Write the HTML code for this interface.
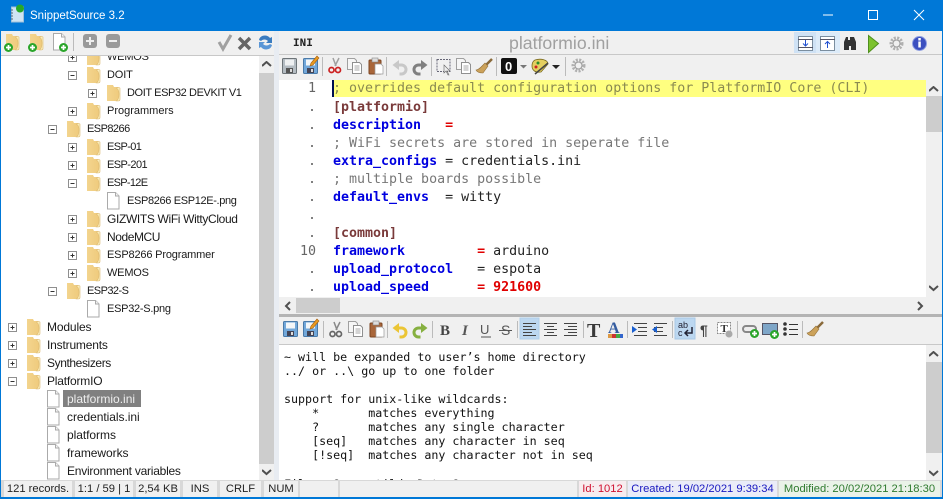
<!DOCTYPE html>
<html><head><meta charset="utf-8">
<style>
html,body{margin:0;padding:0;width:943px;height:499px;overflow:hidden;background:#f0f0f0}
body{position:relative;font-family:"Liberation Sans",sans-serif;font-size:12px;color:#111}
.a,.t,.c,.m,.i,.s{position:absolute}
.t{white-space:nowrap;line-height:18px;height:18px;color:#1a1a1a}
.u{font-size:11px}
.c,.m{font-family:"DejaVu Sans Mono",monospace;white-space:pre}
.c{left:333px;font-size:13.3px;line-height:18px;height:18px;color:#444}
.m{left:284px;font-size:11.67px;line-height:14px;height:14px;color:#111}
.k{font-weight:bold;color:#0000e0}.r{font-weight:bold;color:#e00000}.g{color:#777}
.n{position:absolute;left:280px;width:36px;text-align:right;font-family:"DejaVu Sans Mono",monospace;font-size:13.33px;line-height:18px;color:#666}
.s{top:481px;height:16px;line-height:16px;background:#f0f0f0;text-align:center;white-space:nowrap;font-size:11.2px;color:#222}
</style></head><body>
<svg width="0" height="0" style="position:absolute"><defs>
<linearGradient id="fg" x1="0" y1="0" x2="1" y2="0"><stop offset="0" stop-color="#f3d48e"/><stop offset="1" stop-color="#efcb7c"/></linearGradient>
<g id="fo"><path d="M0 1h6l1 2h4l1.500 1v11.500c0 1-1 1.500-2 1.500h-10.500z" fill="url(#fg)"/><path d="M9 4c2 .5 3 2 3 6s-1 6-2.500 7h1.500c1 0 2-.5 2-1.500v-11.500l-1-.5z" fill="#fbeebb" stroke="#dcb973" stroke-width=".6"/></g>
<g id="fi"><path d="M.5.5h8l3.500 3.500v13h-11.500z" fill="#fff" stroke="#aaa"/><path d="M8.500.5v3.500h3.500" fill="#f2f2f2" stroke="#aaa"/></g>
<g id="pl"><rect x=".5" y=".5" width="8" height="8" fill="#fff" stroke="#8f8f8f"/><path d="M2.500 4.500h4M4.500 2.500v4" stroke="#333"/></g>
<g id="mi"><rect x=".5" y=".5" width="8" height="8" fill="#fff" stroke="#8f8f8f"/><path d="M2.500 4.500h4" stroke="#333"/></g>
<g id="sv"><rect x=".5" y=".5" width="14" height="15" rx="1" fill="#b4bcc2" stroke="#6d7478"/><rect x="3" y="1.500" width="9" height="6" fill="#eef0f1"/><rect x="4" y="10" width="7" height="5" fill="#555"/><rect x="8" y="11" width="2" height="3" fill="#ddd"/></g>
<g id="sb"><rect x=".5" y=".5" width="14" height="15" rx="1" fill="#72a8da" stroke="#4a7aa8"/><rect x="3" y="1.500" width="9" height="6" fill="#f3f6f8"/><rect x="4" y="10" width="7" height="5" fill="#445"/><rect x="8" y="11" width="2" height="3" fill="#ddd"/></g>
<g id="pp"><path d="M12 0l2 2-6 7-3 1 1-3z" fill="#e89a20" stroke="#a86010" stroke-width=".6"/></g>
<g id="cut"><path d="M5 0l3 8M11 0l-4 8" stroke="#888" stroke-width="1.500" fill="none"/><circle cx="3.500" cy="12" r="2.500" fill="none" stroke="#666" stroke-width="1.700"/><circle cx="10" cy="12" r="2.500" fill="none" stroke="#666" stroke-width="1.700"/></g>
<g id="cutr"><path d="M5 0l3 8M11 0l-4 8" stroke="#a0a0a0" stroke-width="1.500" fill="none"/><circle cx="3.500" cy="12" r="2.500" fill="none" stroke="#c22" stroke-width="1.700"/><circle cx="10" cy="12" r="2.500" fill="none" stroke="#c22" stroke-width="1.700"/></g>
<g id="cp"><path d="M.5.5h7l2 2v9h-9z" fill="#f6f6f6" stroke="#a0a0a0"/><path d="M5.500 4.500h7l2 2v9h-9z" fill="#fff" stroke="#909090"/><path d="M7.500 8h5M7.500 10h5M7.500 12h5" stroke="#aaa"/></g>
<g id="pa"><rect x="1" y="2" width="12" height="14" rx="1" fill="#a9663a" stroke="#7c4522"/><rect x="4" y="0" width="6" height="4" fill="#ddd" stroke="#888" stroke-width=".6"/><path d="M7 6h6l2 2v8h-8z" fill="#fff" stroke="#999" stroke-width=".7"/></g>
<g id="br"><path d="M16 1l-6 6" stroke="#8a6a3a" stroke-width="2.500"/><path d="M9 5l3 3-5 7c-3 0-6-1-7-3 3 0 6-4 9-7z" fill="#cca25a" stroke="#937038" stroke-width=".6"/></g>
<g id="gear"><circle cx="7.500" cy="7.500" r="5.500" fill="none" stroke="#b0b0b0" stroke-width="3" stroke-dasharray="2 1.300"/><circle cx="7.500" cy="7.500" r="3.500" fill="none" stroke="#999"/></g>
<g id="un"><path d="M6 6h3.500a4.500 4.500 0 0 1 0 9h-2" fill="none" stroke-width="3"/><path d="M7 1L.5 6 7 11z" stroke="none"/></g>
<path id="chu" d="M0 5l4.500-4 4.500 4" fill="none" stroke="#505050" stroke-width="2"/>
<g id="plusg"><circle cx="4.500" cy="4.500" r="4.500" fill="#2aa52a"/><path d="M2 4.500h5M4.500 2v5" stroke="#fff" stroke-width="1.700"/></g>
</defs></svg>

<!-- title bar -->
<div class="a" style="left:0;top:0;width:943px;height:31px;background:#0078d7"></div>
<svg class="a" style="left:10px;top:4px" width="16" height="19"><rect x="1.500" y="3" width="12" height="15" fill="#cfe4f3" stroke="#9fc0d8"/><path d="M1 6h2M1 9h2M1 12h2M1 15h2" stroke="#567"/><circle cx="10" cy="4.500" r="4" fill="#28a828"/></svg>
<div class="t" style="left:30px;top:7px;color:#fff;font-size:11.500px">SnippetSource 3.2</div>
<svg class="a" style="left:820px;top:8px" width="120" height="16"><path d="M3 7h10" stroke="#fff"/><rect x="48.500" y="2.500" width="9" height="9" fill="none" stroke="#fff"/><path d="M94 2l10 10M104 2l-10 10" stroke="#fff"/></svg>

<!-- window border -->
<div class="a" style="left:0;top:31px;width:1px;height:468px;background:#0078d7"></div>
<div class="a" style="left:942px;top:31px;width:1px;height:468px;background:#0078d7"></div>
<div class="a" style="left:0;top:497px;width:943px;height:2px;background:#0078d7"></div>

<!-- left toolbar -->
<div class="a" style="left:1px;top:31px;width:273px;height:25px;background:#f0f0f0;border-bottom:1px solid #c8c8c8;box-sizing:border-box"></div>
<svg class="a" style="left:0;top:31px" width="279" height="25">
<use href="#fo" x="6" y="2"/><use href="#plusg" x="4" y="12"/>
<use href="#fo" x="30" y="2"/><use href="#plusg" x="28" y="12"/>
<use href="#fi" x="53" y="2"/><use href="#plusg" x="59" y="12"/>
<path d="M73.500 2v18" stroke="#bbb"/>
<rect x="83" y="3" width="14" height="14" rx="3" fill="#9a9a9a"/><path d="M86 10h8M90 6v8" stroke="#eee" stroke-width="2"/>
<rect x="106" y="3" width="14" height="14" rx="3" fill="#9a9a9a"/><path d="M109 10h8" stroke="#eee" stroke-width="2"/>
<path d="M219 11l4 7 8-14" fill="none" stroke="#a0a0a0" stroke-width="3"/>
<path d="M239 7l11 11M250 7l-11 11" stroke="#666" stroke-width="3.500"/>
<path d="M259 9c1-5 8-6 11-2l2-1v6h-6l2-2c-2-2-5-2-7 0z" fill="#3a7cc0"/><path d="M272 14c-1 5-8 6-11 2l-2 1v-6h6l-2 2c2 2 5 2 7 0z" fill="#5a96d6"/>
</svg>

<!-- tree -->
<div class="a" style="left:1px;top:56px;width:258px;height:425px;background:#fff;overflow:hidden">
<svg class="a" style="left:-1px;top:-56px" width="259" height="481">
<use href="#pl" x="68" y="53"/><use href="#fo" x="87" y="48"/>
<use href="#mi" x="68" y="71"/><use href="#fo" x="87" y="66"/>
<use href="#pl" x="88" y="89"/><use href="#fo" x="107" y="84"/>
<use href="#pl" x="68" y="107"/><use href="#fo" x="87" y="102"/>
<use href="#mi" x="48" y="125"/><use href="#fo" x="67" y="120"/>
<use href="#pl" x="68" y="143"/><use href="#fo" x="87" y="138"/>
<use href="#pl" x="68" y="161"/><use href="#fo" x="87" y="156"/>
<use href="#mi" x="68" y="179"/><use href="#fo" x="87" y="174"/>
<use href="#fi" x="107" y="192"/>
<use href="#pl" x="68" y="215"/><use href="#fo" x="87" y="210"/>
<use href="#pl" x="68" y="233"/><use href="#fo" x="87" y="228"/>
<use href="#pl" x="68" y="251"/><use href="#fo" x="87" y="246"/>
<use href="#pl" x="68" y="269"/><use href="#fo" x="87" y="264"/>
<use href="#mi" x="48" y="287"/><use href="#fo" x="67" y="282"/>
<use href="#fi" x="87" y="300"/>
<use href="#pl" x="8" y="323"/><use href="#fo" x="27" y="318"/>
<use href="#pl" x="8" y="341"/><use href="#fo" x="27" y="336"/>
<use href="#pl" x="8" y="359"/><use href="#fo" x="27" y="354"/>
<use href="#mi" x="8" y="377"/><use href="#fo" x="27" y="372"/>
<use href="#fi" x="47" y="390"/><use href="#fi" x="47" y="408"/><use href="#fi" x="47" y="426"/><use href="#fi" x="47" y="444"/><use href="#fi" x="47" y="462"/>
</svg>
<div class="t u" style="left:106px;top:-8px;letter-spacing:-.2px">WEMOS</div>
<div class="t u" style="left:106px;top:10px;letter-spacing:-.15px">DOIT</div>
<div class="t u" style="left:126px;top:28px;letter-spacing:-.4px">DOIT ESP32 DEVKIT V1</div>
<div class="t u" style="left:106px;top:46px">Programmers</div>
<div class="t u" style="left:86px;top:64px;letter-spacing:-.55px">ESP8266</div>
<div class="t u" style="left:106px;top:82px;letter-spacing:-.6px">ESP-01</div>
<div class="t u" style="left:106px;top:100px;letter-spacing:-.57px">ESP-201</div>
<div class="t u" style="left:106px;top:118px;letter-spacing:-.7px">ESP-12E</div>
<div class="t u" style="left:126px;top:136px;letter-spacing:-.35px">ESP8266 ESP12E-.png</div>
<div class="t" style="left:106px;top:154px;letter-spacing:-.35px">GIZWITS WiFi WittyCloud</div>
<div class="t" style="left:106px;top:172px;letter-spacing:-.43px">NodeMCU</div>
<div class="t u" style="left:106px;top:190px;letter-spacing:-.17px">ESP8266 Programmer</div>
<div class="t u" style="left:106px;top:208px;letter-spacing:-.2px">WEMOS</div>
<div class="t u" style="left:86px;top:226px;letter-spacing:-.55px">ESP32-S</div>
<div class="t u" style="left:106px;top:244px;letter-spacing:-.27px">ESP32-S.png</div>
<div class="t" style="left:46px;top:262px;letter-spacing:-.14px">Modules</div>
<div class="t" style="left:46px;top:280px;letter-spacing:-.18px">Instruments</div>
<div class="t" style="left:46px;top:298px;letter-spacing:-.4px">Synthesizers</div>
<div class="t" style="left:46px;top:316px;letter-spacing:-.2px">PlatformIO</div>
<div class="a" style="left:62px;top:334px;width:78px;height:17px;background:#808080"></div>
<div class="t" style="left:66px;top:334px;color:#eee">platformio.ini</div>
<div class="t" style="left:66px;top:352px;letter-spacing:-.05px">credentials.ini</div>
<div class="t" style="left:66px;top:370px;letter-spacing:-.05px">platforms</div>
<div class="t" style="left:66px;top:388px;letter-spacing:-.05px">frameworks</div>
<div class="t" style="left:66px;top:406px;letter-spacing:-.24px">Environment variables</div>
</div>
<!-- tree scrollbar -->
<div class="a" style="left:259px;top:56px;width:15px;height:425px;background:#f0f0f0"></div>
<div class="a" style="left:259px;top:73px;width:15px;height:391px;background:#cdcdcd"></div>
<svg class="a" style="left:262px;top:61px" width="10" height="8"><use href="#chu"/></svg>
<svg class="a" style="left:262px;top:468px" width="10" height="8"><use href="#chu" transform="matrix(1 0 0 -1 0 7)"/></svg>
<div class="a" style="left:274px;top:31px;width:5px;height:450px;background:#e8ecf2"></div>

<!-- right top header -->
<div class="a" style="left:279px;top:31px;width:663px;height:24px;background:#f0f0f0;border-bottom:1px solid #c8c8c8;box-sizing:border-box"></div>
<div class="t" style="left:293px;top:35px;font-family:'Liberation Mono',monospace;font-weight:bold;font-size:11px;color:#222">INI</div>
<div class="t" style="left:509px;top:33px;font-size:17.700px;color:#a0a0a0;line-height:20px;height:20px">platformio.ini</div>
<svg class="a" style="left:790px;top:31px" width="150" height="25">
<rect x="4" y="1" width="22" height="21" fill="#cfe2f5"/><rect x="26" y="1" width="24" height="21" fill="#dcebf9"/>
<rect x="8.500" y="5.500" width="14" height="14" fill="#fff" stroke="#7b8e9f"/><path d="M8 8.500h15M8 16.500h15" stroke="#556"/><path d="M15.500 9v6M13 12.500l2.500 2.500 2.500-2.500" stroke="#2050d0" fill="none"/>
<rect x="30.500" y="5.500" width="14" height="14" fill="#fff" stroke="#7b8e9f"/><path d="M30 8.500h15" stroke="#556"/><path d="M37.500 17v-6M35 13l2.500-2.500 2.500 2.500" stroke="#2050d0" fill="none"/>
<path d="M54 11l2-5h2v3h2v-3h2l2 0 2 5v8h-5v-4h-2v4h-5z" fill="#333"/>
<path d="M78.500 4.500l10 8-10 9z" fill="#7cc22e" stroke="#4f8f1e"/>
<use href="#gear" x="99" y="5"/>
<circle cx="129.500" cy="12.500" r="7" fill="#3c50c0" stroke="#8f9fe0"/><rect x="128.300" y="10.500" width="2.500" height="6" fill="#fff"/><rect x="128.300" y="7" width="2.500" height="2.500" fill="#fff"/>
</svg>

<!-- editor toolbar -->
<div class="a" style="left:279px;top:55px;width:663px;height:25px;background:#f0f0f0"></div>
<svg class="a" style="left:279px;top:55px" width="320" height="25">
<use href="#sv" x="3" y="3"/><use href="#sb" x="24" y="3"/><use href="#pp" x="26" y="1"/>
<path d="M43.500 2v19M107.500 2v19M152.500 2v19M217.500 2v19M286.500 2v19" stroke="#bbb"/>
<use href="#cutr" x="49" y="3"/><use href="#cp" x="68" y="3"/><use href="#pa" x="89" y="3"/>
<use href="#un" x="113" y="4" fill="#c8c8c8" stroke="#c8c8c8"/>
<use href="#un" transform="translate(149 4) scale(-1 1)" fill="#808080" stroke="#808080"/>
<rect x="158" y="4.500" width="13" height="12" fill="none" stroke="#667" stroke-dasharray="2 1"/><path d="M165 10l6 6-3 0 2 4-1 0-2-4-2 2z" fill="#eee" stroke="#666" stroke-width=".6"/>
<use href="#cp" x="177" y="3"/><use href="#br" x="197" y="3"/>
<rect x="222" y="3" width="16" height="16" rx="2" fill="#111"/><text x="226" y="16" font-family="Liberation Sans" font-weight="bold" font-size="13" fill="#fff">0</text>
<path d="M241 10h7l-3.500 3.500z" fill="#777"/>
<path d="M256 5c6-2 13 0 13 4l-7 8c-6 1-9-2-9-6 0-3 1-5 3-6z" fill="#e4cf60" stroke="#7a6a20" stroke-width=".8"/><circle cx="259" cy="8" r="1.500" fill="#2a8c2a"/><circle cx="257" cy="12" r="1.500" fill="#c22"/><path d="M256 19l13-11" stroke="#444" stroke-width="1.500"/>
<path d="M273 10h8l-4 4z" fill="#222"/>
<use href="#gear" x="292" y="3"/>
</svg>

<!-- editor -->
<div class="a" style="left:279px;top:80px;width:663px;height:217px;background:#fff"></div>
<div class="a" style="left:333px;top:80px;width:593px;height:17px;background:#ffff80"></div>
<div class="a" style="left:332px;top:80px;width:2px;height:17px;background:#001050"></div>
<div class="n" style="top:80px">1</div>
<div class="n" style="top:99px">.</div><div class="n" style="top:117px">.</div><div class="n" style="top:135px">.</div><div class="n" style="top:153px">.</div><div class="n" style="top:171px">.</div><div class="n" style="top:189px">.</div><div class="n" style="top:207px">.</div><div class="n" style="top:225px">.</div>
<div class="n" style="top:243px">10</div><div class="n" style="top:261px">.</div><div class="n" style="top:279px">.</div>
<div class="c" style="top:80px;color:#8a8a50">; overrides default configuration options for PlatformIO Core (CLI)</div>
<div class="c" style="top:99px;font-weight:bold;color:#7a3a3a">[platformio]</div>
<div class="c" style="top:117px"><span class="k">description</span>   <span class="r">=</span></div>
<div class="c g" style="top:135px">; WiFi secrets are stored in seperate file</div>
<div class="c" style="top:153px;color:#222"><span class="k">extra_configs</span> = credentials.ini</div>
<div class="c g" style="top:171px">; multiple boards possible</div>
<div class="c" style="top:189px;color:#222"><span class="k">default_envs</span>  = witty</div>
<div class="c" style="top:225px;font-weight:bold;color:#7a3a3a">[common]</div>
<div class="c" style="top:243px;color:#222"><span class="k">framework</span>         <span class="r">=</span> arduino</div>
<div class="c" style="top:261px;color:#222"><span class="k">upload_protocol</span>   = espota</div>
<div class="c" style="top:279px;color:#222"><span class="k">upload_speed</span>      <span class="r">= 921600</span></div>
<!-- editor v scrollbar -->
<div class="a" style="left:926px;top:80px;width:16px;height:217px;background:#f0f0f0"></div>
<div class="a" style="left:926px;top:96px;width:16px;height:36px;background:#cdcdcd"></div>
<svg class="a" style="left:929px;top:86px" width="10" height="8"><use href="#chu"/></svg>
<svg class="a" style="left:929px;top:284px" width="10" height="8"><use href="#chu" transform="matrix(1 0 0 -1 0 7)"/></svg>
<!-- h scrollbar -->
<div class="a" style="left:279px;top:297px;width:663px;height:17px;background:#f0f0f0"></div>
<div class="a" style="left:296px;top:298px;width:44px;height:15px;background:#cdcdcd"></div>
<svg class="a" style="left:284px;top:301px" width="8" height="10"><path d="M6 1L2 5l4 4" fill="none" stroke="#505050" stroke-width="2"/></svg>
<svg class="a" style="left:916px;top:301px" width="8" height="10"><path d="M2 1l4 4-4 4" fill="none" stroke="#505050" stroke-width="2"/></svg>
<!-- splitter -->
<div class="a" style="left:279px;top:314px;width:663px;height:3px;background:#b4b4b4"></div>

<!-- memo toolbar -->
<div class="a" style="left:279px;top:317px;width:663px;height:28px;background:#f0f0f0;border-bottom:1px solid #c8c8c8;box-sizing:border-box"></div>
<svg class="a" style="left:0;top:0" width="943" height="345">
<use href="#sb" x="283" y="321"/><use href="#sb" x="303" y="321"/><use href="#pp" x="305" y="319"/>
<path d="M323.500 321v17M387.500 321v17M432.500 321v17M517.500 321v17M583.500 321v17M627.500 321v17M672.500 321v17M737.500 321v17M802.500 321v17" stroke="#bbb"/>
<use href="#cut" x="329" y="322"/><use href="#cp" x="348" y="321"/><use href="#pa" x="369" y="321"/>
<use href="#un" x="392" y="322" fill="#ebc535" stroke="#ebc535"/>
<use href="#un" transform="translate(428 322) scale(-1 1)" fill="#86b040" stroke="#86b040"/>
<text x="440" y="335" font-family="Liberation Serif" font-weight="bold" font-size="15" fill="#444">B</text>
<text x="462" y="335" font-family="Liberation Serif" font-style="italic" font-weight="bold" font-size="15" fill="#555">I</text>
<text x="480" y="334" font-family="Liberation Sans" font-size="13" fill="#555">U</text><path d="M481 337h10" stroke="#555"/>
<text x="501" y="335" font-family="Liberation Sans" font-size="14" fill="#555">S</text><path d="M499 330.500h13" stroke="#555"/>
<rect x="520" y="318" width="19" height="21" fill="#bcd7f0" stroke="#b0cfea"/>
<path d="M523 323.500h13M523 326.500h9M523 329.500h13M523 332.500h9M523 335.500h13M544 323.500h13M547 326.500h7M544 329.500h13M547 332.500h7M544 335.500h13M564 323.500h13M568 326.500h9M564 329.500h13M568 332.500h9M564 335.500h13" stroke="#444"/>
<text x="587" y="337" font-family="Liberation Serif" font-weight="bold" font-size="20" fill="#3a3a3a">T</text>
<text x="608" y="333" font-family="Liberation Serif" font-weight="bold" font-size="16" fill="#345ca0">A</text>
<rect x="608" y="334" width="4" height="4" fill="#d94"/><rect x="612" y="334" width="4" height="4" fill="#c33"/><rect x="616" y="334" width="4" height="4" fill="#4a4"/><rect x="620" y="334" width="3" height="4" fill="#36c"/>
<path d="M634 323.500h13M638 327.500h9M638 331.500h9M634 335.500h13" stroke="#444"/><path d="M632 326l5 3.500-5 3.500z" fill="#1a5fd0"/>
<path d="M654 323.500h13M654 327.500h9M654 331.500h9M654 335.500h13" stroke="#444"/><path d="M657 326l-5 3.500 5 3.500z" fill="#1a5fd0"/>
<rect x="675" y="318" width="20" height="21" fill="#bcd7f0" stroke="#a9c9e6"/>
<text x="678" y="328" font-family="Liberation Sans" font-size="9" fill="#223">ab</text><text x="678" y="336" font-family="Liberation Sans" font-size="9" fill="#223">c</text>
<path d="M692 327v6h-7M688 330l-3 3 3 3" fill="none" stroke="#223" stroke-width="1.500"/>
<text x="700" y="335" font-family="Liberation Sans" font-weight="bold" font-size="14" fill="#444">¶</text>
<rect x="717.500" y="322.500" width="13" height="11" fill="#fff" stroke="#888" stroke-dasharray="2 1"/><text x="720.500" y="332" font-family="Liberation Serif" font-weight="bold" font-size="11" fill="#333">T</text><circle cx="729" cy="334" r="3.500" fill="#aaa"/>
<rect x="743" y="326" width="13" height="6" rx="3" fill="#eee" stroke="#888" stroke-width="2"/><use href="#plusg" x="750" y="329"/>
<rect x="762.500" y="323.500" width="15" height="11" fill="#7ea6c8" stroke="#556"/><use href="#plusg" x="770" y="330"/>
<circle cx="785" cy="324" r="1.800" fill="#333"/><circle cx="785" cy="329" r="1.800" fill="#333"/><circle cx="785" cy="334" r="1.800" fill="#333"/><path d="M789 324.500h9M789 329.500h9M789 334.500h9" stroke="#333"/>
<use href="#br" x="807" y="321"/>
</svg>
<!-- memo -->
<div class="a" style="left:279px;top:345px;width:663px;height:136px;background:#fff"></div>
<div class="m" style="top:350px">~ will be expanded to user’s home directory</div>
<div class="m" style="top:364px">../ or ..\ go up to one folder</div>
<div class="m" style="top:392px">support for unix-like wildcards:</div>
<div class="m" style="top:406px">    *       matches everything</div>
<div class="m" style="top:420px">    ?       matches any single character</div>
<div class="m" style="top:434px">    [seq]   matches any character in seq</div>
<div class="m" style="top:448px">    [!seq]  matches any character not in seq</div>
<div class="m" style="top:477px;height:3px;overflow:hidden">File   ?     tilde Data ?</div>
<!-- memo scrollbar -->
<div class="a" style="left:926px;top:345px;width:16px;height:136px;background:#f0f0f0"></div>
<div class="a" style="left:926px;top:362px;width:16px;height:91px;background:#cdcdcd"></div>
<svg class="a" style="left:929px;top:351px" width="10" height="8"><use href="#chu"/></svg>
<svg class="a" style="left:929px;top:469px" width="10" height="8"><use href="#chu" transform="matrix(1 0 0 -1 0 7)"/></svg>

<!-- status bar -->
<div class="a" style="left:1px;top:480px;width:941px;height:17px;background:#d8d8d8"></div>
<div class="s" style="left:4px;width:68px">121 records.</div>
<div class="s" style="left:75px;width:58px">1:1 / 59 | 1</div>
<div class="s" style="left:136px;width:44px">2,54 KB</div>
<div class="s" style="left:183px;width:34px">INS</div>
<div class="s" style="left:220px;width:41px">CRLF</div>
<div class="s" style="left:264px;width:34px">NUM</div>
<div class="s" style="left:300px;width:38px"></div>
<div class="s" style="left:340px;width:237px"></div>
<div class="s" style="left:579px;width:47px;background:#f7ecef;color:#d01030">Id: 1012</div>
<div class="s" style="left:628px;width:149px;background:#eaecf8;color:#1818c0">Created: 19/02/2021 9:39:34</div>
<div class="s" style="left:779px;width:161px;background:#eaf2e8;color:#2e7a2e">Modified: 20/02/2021 21:18:30</div>
</body></html>
